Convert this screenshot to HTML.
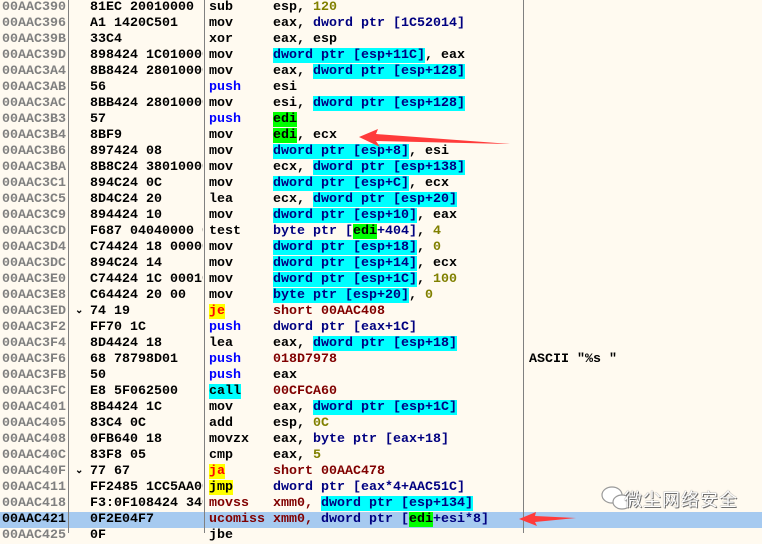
<!DOCTYPE html>
<html><head><meta charset="utf-8"><style>
body{margin:0;width:762px;height:533px;overflow:hidden;background:#fffaf0;position:relative;font-family:"Liberation Mono",monospace;font-weight:bold;font-size:13.33px;}
.r{position:absolute;left:0;width:762px;height:16px;line-height:16px;white-space:pre;}
.r span{white-space:pre}
.a{position:absolute;left:2px;color:#808080}
.h{position:absolute;left:90px;width:113px;overflow:hidden;color:#000}
.m{position:absolute;left:209px;color:#000}
.o{position:absolute;left:273px;color:#000}
.k{position:absolute;left:75px;color:#000;font-size:10px}
.cm{position:absolute;left:529px;color:#000}
.c{background:#00ffff;color:#000080}
.n{color:#000080}
.g{background:#00ff00;color:#000}
.y{color:#808000}
.d{color:#800000}
.b{color:#0000ff}
.jr{background:#ffff00;color:#ff0000}
.jy{background:#ffff00;color:#000}
.cl{background:#00ffff;color:#000}
.sel{background:#a6caf0}
.sel .a{color:#000}
.vl{position:absolute;top:0;height:533px;width:1px;background:#808080}
</style></head><body>
<div class="r" style="top:0"><span class="a">00AAC390</span><span class="h">81EC 20010000</span><span class="m">sub</span><span class="o">esp, <span class="y">120</span></span></div>
<div class="r" style="top:16px"><span class="a">00AAC396</span><span class="h">A1 1420C501</span><span class="m">mov</span><span class="o">eax, <span class="n">dword ptr [1C52014]</span></span></div>
<div class="r" style="top:32px"><span class="a">00AAC39B</span><span class="h">33C4</span><span class="m">xor</span><span class="o">eax, esp</span></div>
<div class="r" style="top:48px"><span class="a">00AAC39D</span><span class="h">898424 1C010000</span><span class="m">mov</span><span class="o"><span class="c">dword ptr [esp+11C]</span>, eax</span></div>
<div class="r" style="top:64px"><span class="a">00AAC3A4</span><span class="h">8B8424 28010000</span><span class="m">mov</span><span class="o">eax, <span class="c">dword ptr [esp+128]</span></span></div>
<div class="r" style="top:80px"><span class="a">00AAC3AB</span><span class="h">56</span><span class="m b">push</span><span class="o">esi</span></div>
<div class="r" style="top:96px"><span class="a">00AAC3AC</span><span class="h">8BB424 28010000</span><span class="m">mov</span><span class="o">esi, <span class="c">dword ptr [esp+128]</span></span></div>
<div class="r" style="top:112px"><span class="a">00AAC3B3</span><span class="h">57</span><span class="m b">push</span><span class="o"><span class="g">edi</span></span></div>
<div class="r" style="top:128px"><span class="a">00AAC3B4</span><span class="h">8BF9</span><span class="m">mov</span><span class="o"><span class="g">edi</span>, ecx</span></div>
<div class="r" style="top:144px"><span class="a">00AAC3B6</span><span class="h">897424 08</span><span class="m">mov</span><span class="o"><span class="c">dword ptr [esp+8]</span>, esi</span></div>
<div class="r" style="top:160px"><span class="a">00AAC3BA</span><span class="h">8B8C24 38010000</span><span class="m">mov</span><span class="o">ecx, <span class="c">dword ptr [esp+138]</span></span></div>
<div class="r" style="top:176px"><span class="a">00AAC3C1</span><span class="h">894C24 0C</span><span class="m">mov</span><span class="o"><span class="c">dword ptr [esp+C]</span>, ecx</span></div>
<div class="r" style="top:192px"><span class="a">00AAC3C5</span><span class="h">8D4C24 20</span><span class="m">lea</span><span class="o">ecx, <span class="c">dword ptr [esp+20]</span></span></div>
<div class="r" style="top:208px"><span class="a">00AAC3C9</span><span class="h">894424 10</span><span class="m">mov</span><span class="o"><span class="c">dword ptr [esp+10]</span>, eax</span></div>
<div class="r" style="top:224px"><span class="a">00AAC3CD</span><span class="h">F687 04040000 04</span><span class="m">test</span><span class="o"><span class="n">byte ptr [<span class="g">edi</span>+404]</span>, <span class="y">4</span></span></div>
<div class="r" style="top:240px"><span class="a">00AAC3D4</span><span class="h">C74424 18 00000000</span><span class="m">mov</span><span class="o"><span class="c">dword ptr [esp+18]</span>, <span class="y">0</span></span></div>
<div class="r" style="top:256px"><span class="a">00AAC3DC</span><span class="h">894C24 14</span><span class="m">mov</span><span class="o"><span class="c">dword ptr [esp+14]</span>, ecx</span></div>
<div class="r" style="top:272px"><span class="a">00AAC3E0</span><span class="h">C74424 1C 00010000</span><span class="m">mov</span><span class="o"><span class="c">dword ptr [esp+1C]</span>, <span class="y">100</span></span></div>
<div class="r" style="top:288px"><span class="a">00AAC3E8</span><span class="h">C64424 20 00</span><span class="m">mov</span><span class="o"><span class="c">byte ptr [esp+20]</span>, <span class="y">0</span></span></div>
<div class="r" style="top:304px"><span class="a">00AAC3ED</span><span class="k">⌄</span><span class="h">74 19</span><span class="m"><span class="jr">je</span></span><span class="o d">short 00AAC408</span></div>
<div class="r" style="top:320px"><span class="a">00AAC3F2</span><span class="h">FF70 1C</span><span class="m b">push</span><span class="o n">dword ptr [eax+1C]</span></div>
<div class="r" style="top:336px"><span class="a">00AAC3F4</span><span class="h">8D4424 18</span><span class="m">lea</span><span class="o">eax, <span class="c">dword ptr [esp+18]</span></span></div>
<div class="r" style="top:352px"><span class="a">00AAC3F6</span><span class="h">68 78798D01</span><span class="m b">push</span><span class="o d">018D7978</span><span class="cm">ASCII "%s "</span></div>
<div class="r" style="top:368px"><span class="a">00AAC3FB</span><span class="h">50</span><span class="m b">push</span><span class="o">eax</span></div>
<div class="r" style="top:384px"><span class="a">00AAC3FC</span><span class="h">E8 5F062500</span><span class="m"><span class="cl">call</span></span><span class="o d">00CFCA60</span></div>
<div class="r" style="top:400px"><span class="a">00AAC401</span><span class="h">8B4424 1C</span><span class="m">mov</span><span class="o">eax, <span class="c">dword ptr [esp+1C]</span></span></div>
<div class="r" style="top:416px"><span class="a">00AAC405</span><span class="h">83C4 0C</span><span class="m">add</span><span class="o">esp, <span class="y">0C</span></span></div>
<div class="r" style="top:432px"><span class="a">00AAC408</span><span class="h">0FB640 18</span><span class="m">movzx</span><span class="o">eax, <span class="n">byte ptr [eax+18]</span></span></div>
<div class="r" style="top:448px"><span class="a">00AAC40C</span><span class="h">83F8 05</span><span class="m">cmp</span><span class="o">eax, <span class="y">5</span></span></div>
<div class="r" style="top:464px"><span class="a">00AAC40F</span><span class="k">⌄</span><span class="h">77 67</span><span class="m"><span class="jr">ja</span></span><span class="o d">short 00AAC478</span></div>
<div class="r" style="top:480px"><span class="a">00AAC411</span><span class="h">FF2485 1CC5AA00</span><span class="m"><span class="jy">jmp</span></span><span class="o n">dword ptr [eax*4+AAC51C]</span></div>
<div class="r" style="top:496px"><span class="a">00AAC418</span><span class="h">F3:0F108424 34010000</span><span class="m d">movss</span><span class="o"><span class="d">xmm0, </span><span class="c">dword ptr [esp+134]</span></span></div>
<div class="r sel" style="top:512px"><span class="a">00AAC421</span><span class="h">0F2E04F7</span><span class="m d">ucomiss</span><span class="o"><span class="d">xmm0, </span><span class="n">dword ptr [<span class="g">edi</span>+esi*8]</span></span></div>
<div class="r" style="top:528px"><span class="a">00AAC425</span><span class="h">0F</span><span class="m">jbe</span></div>
<div class="vl" style="left:68px"></div>
<div class="vl" style="left:204px"></div>
<div class="vl" style="left:523px"></div>
<svg style="position:absolute;left:0;top:0" width="762" height="533">
<polygon points="359,137 378,129 376,134 510,144 376,141 380,147" fill="#ff3b3b"/>
<polygon points="519,519 536,512 535,516 576,518 535,522 537,526" fill="#ff3b3b"/>
<g fill="#fff" stroke="#999" stroke-width="1.2">
<ellipse cx="612" cy="495" rx="10" ry="8"/>
<ellipse cx="622" cy="502" rx="9" ry="7"/>
</g>
</svg>
<div style="position:absolute;left:624px;top:486px;font-family:'Noto Sans CJK SC',sans-serif;font-weight:normal;font-size:18px;color:#fff;text-shadow:0 0 1px #555,1px 1px 0 #777;letter-spacing:1px">微尘网络安全</div>
</body></html>
